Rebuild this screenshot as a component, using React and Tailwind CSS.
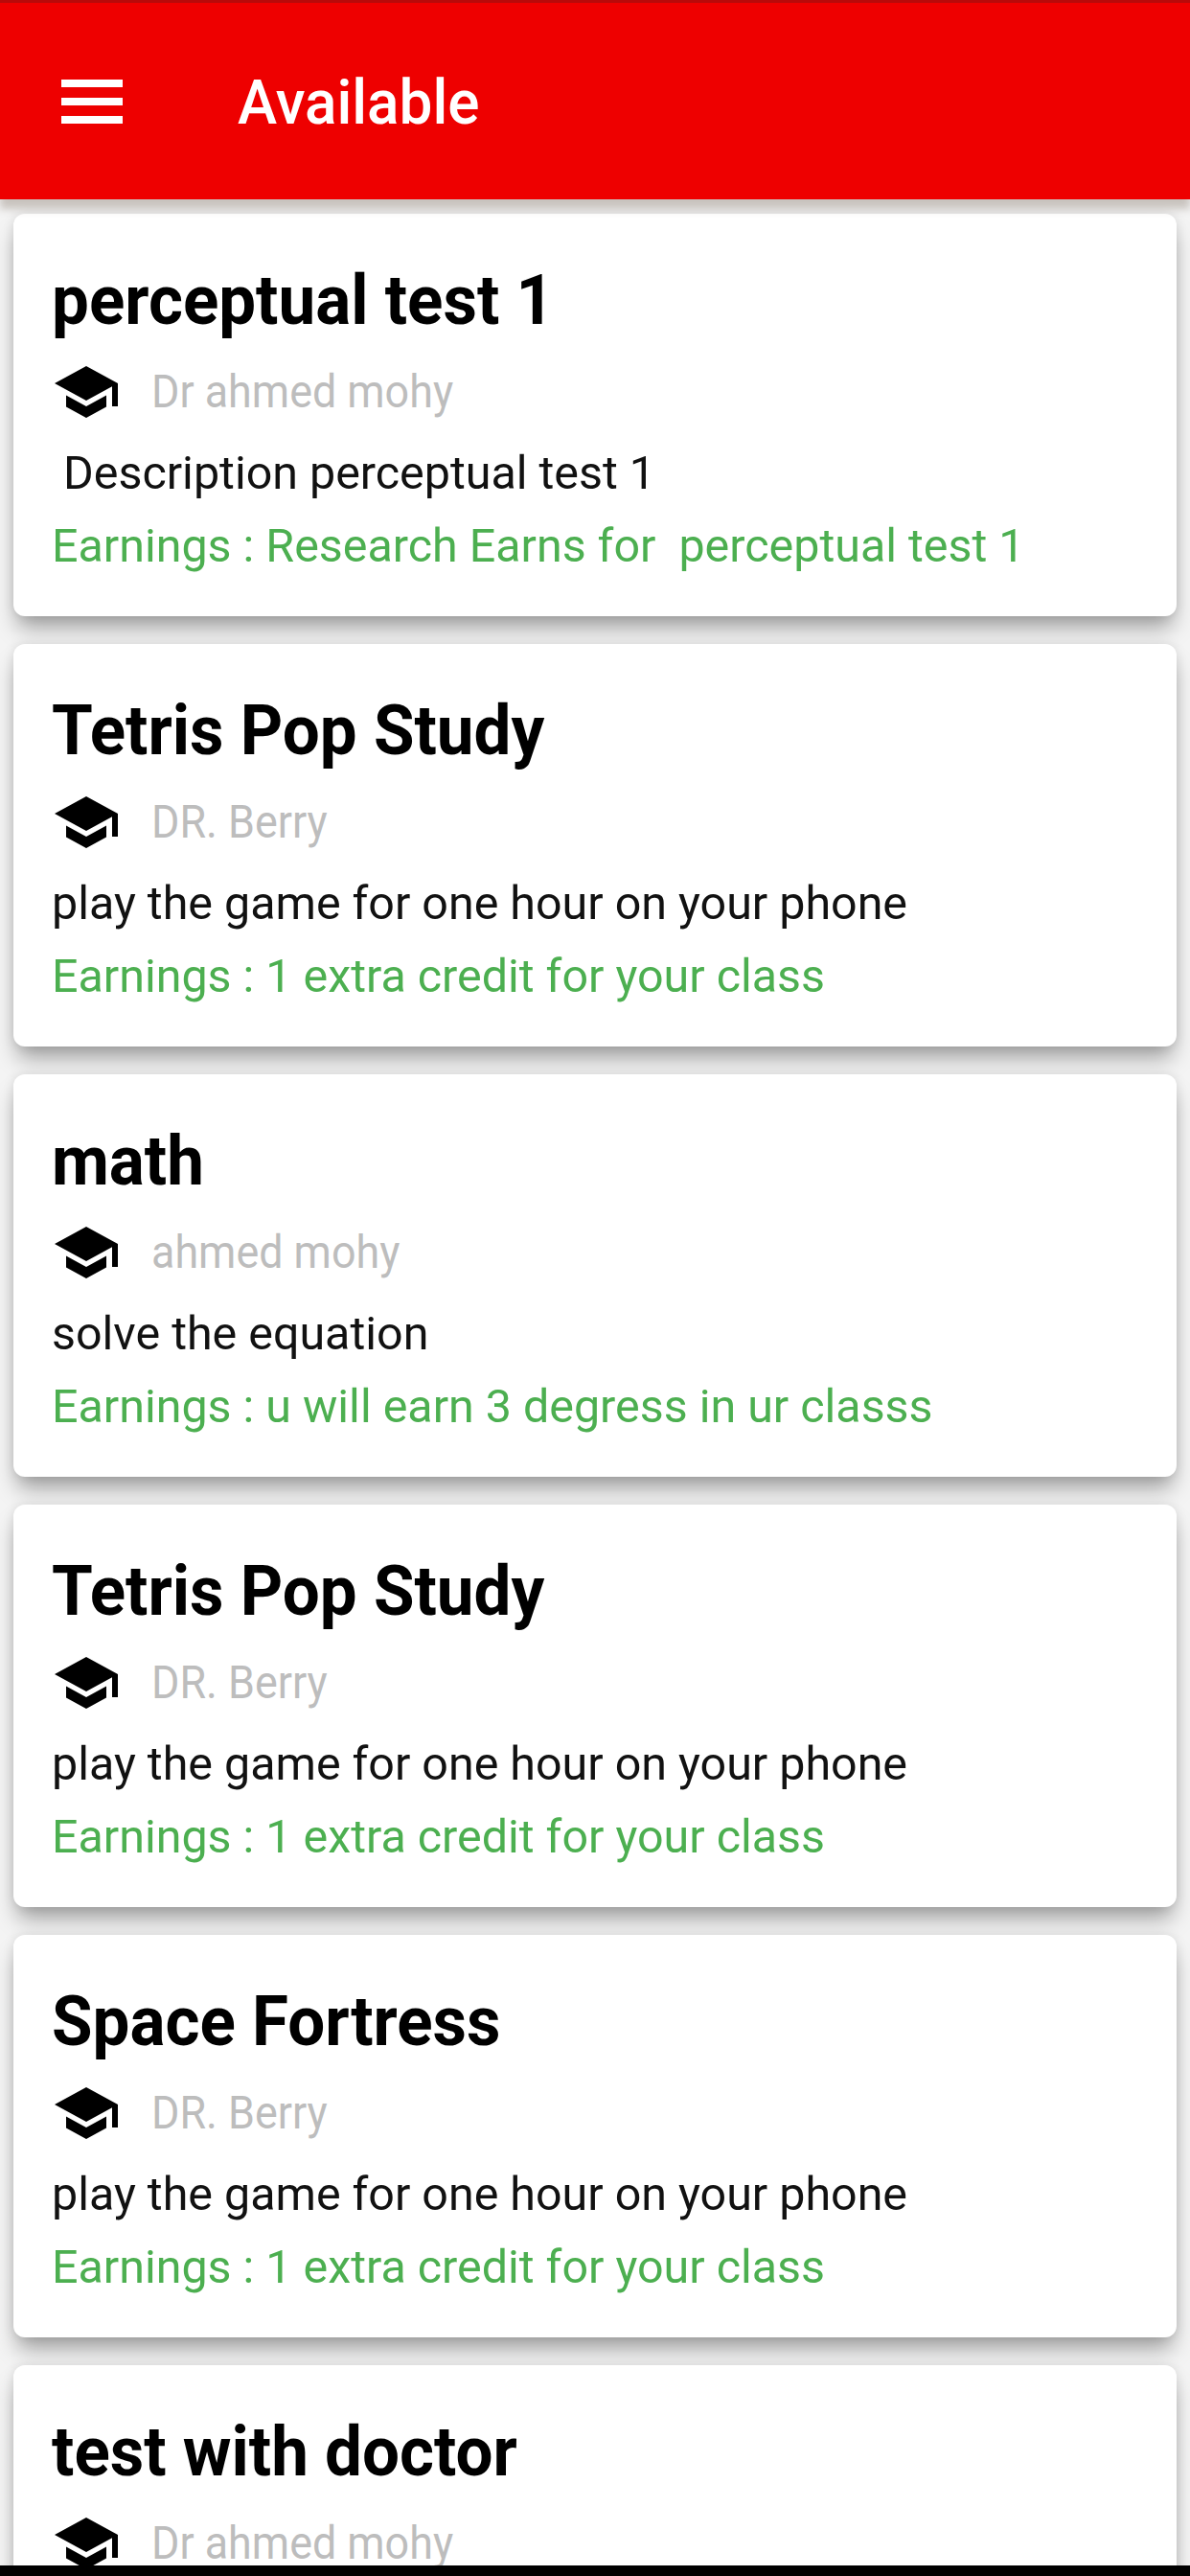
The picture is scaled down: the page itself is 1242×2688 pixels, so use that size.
import React from 'react';

const cards = [
  { title: 'perceptual test 1', author: 'Dr ahmed mohy', desc: '\u00a0Description perceptual test 1', earn: 'Earnings : Research Earns for \u00a0perceptual test 1' },
  { title: 'Tetris Pop Study', author: 'DR. Berry', desc: 'play the game for one hour on your phone', earn: 'Earnings : 1 extra credit for your class' },
  { title: 'math', author: 'ahmed mohy', desc: 'solve the equation', earn: 'Earnings : u will earn 3 degress in ur classs' },
  { title: 'Tetris Pop Study', author: 'DR. Berry', desc: 'play the game for one hour on your phone', earn: 'Earnings : 1 extra credit for your class' },
  { title: 'Space Fortress', author: 'DR. Berry', desc: 'play the game for one hour on your phone', earn: 'Earnings : 1 extra credit for your class' },
  { title: 'test with doctor', author: 'Dr ahmed mohy', desc: '', earn: '' },
];

const SchoolIcon = () => (
  <svg width="72" height="72" viewBox="0 0 24 24" fill="currentColor" className="shrink-0 text-black">
    <path d="M5 13.18v4L12 21l7-3.82v-4L12 17l-7-3.82zM12 3L1 9l11 6 9-4.91V17h2V9L12 3z" />
  </svg>
);

const Card = ({ title, author, desc, earn }) => (
  <div className="h-[420px] shrink-0 rounded-[12px] bg-white px-[40px] pt-[49px] shadow-[0_16px_22px_-4px_rgba(0,0,0,0.34),0_0_12px_rgba(0,0,0,0.1)]">
    <h2 className="h-[84px] origin-left scale-x-[0.96] text-[72px] leading-[84px] font-bold text-black">{title}</h2>
    <div className="mt-[17px] flex h-[72px] items-center gap-[32px]">
      <SchoolIcon />
      <span className="origin-left scale-x-[0.934] text-[48px] text-[#bdbdbd]">{author}</span>
    </div>
    <p className="mt-[17px] h-[64px] text-[48.4px] leading-[64px] text-[#111]">{desc}</p>
    <p className="mt-[12px] h-[64px] text-[48.4px] leading-[64px] text-[#4caf50]">{earn}</p>
  </div>
);

export default function App() {
  return (
    <div className="relative h-[2688px] w-[1242px] overflow-hidden bg-[#f4f4f4] font-['Roboto',sans-serif]">
      <header className="relative z-10 flex h-[208px] items-center border-t-[3px] border-[#b80a0a] bg-[#ee0000] pl-[64px] shadow-[0_10px_8px_rgba(70,50,30,0.25)]">
        <div className="flex w-[64px] flex-col gap-[11px]">
          <span className="h-[8px] bg-white" />
          <span className="h-[8px] bg-white" />
          <span className="h-[8px] bg-white" />
        </div>
        <h1 className="mt-[5px] ml-[120px] origin-left scale-x-[0.97] text-[64px] font-medium text-white">Available</h1>
      </header>
      <main className="flex flex-col gap-[29px] px-[14px] pt-[15px]">
        {cards.map((c, i) => (
          <Card key={i} {...c} />
        ))}
      </main>
      <div className="absolute bottom-0 left-0 z-20 h-[11px] w-full bg-black" />
    </div>
  );
}
